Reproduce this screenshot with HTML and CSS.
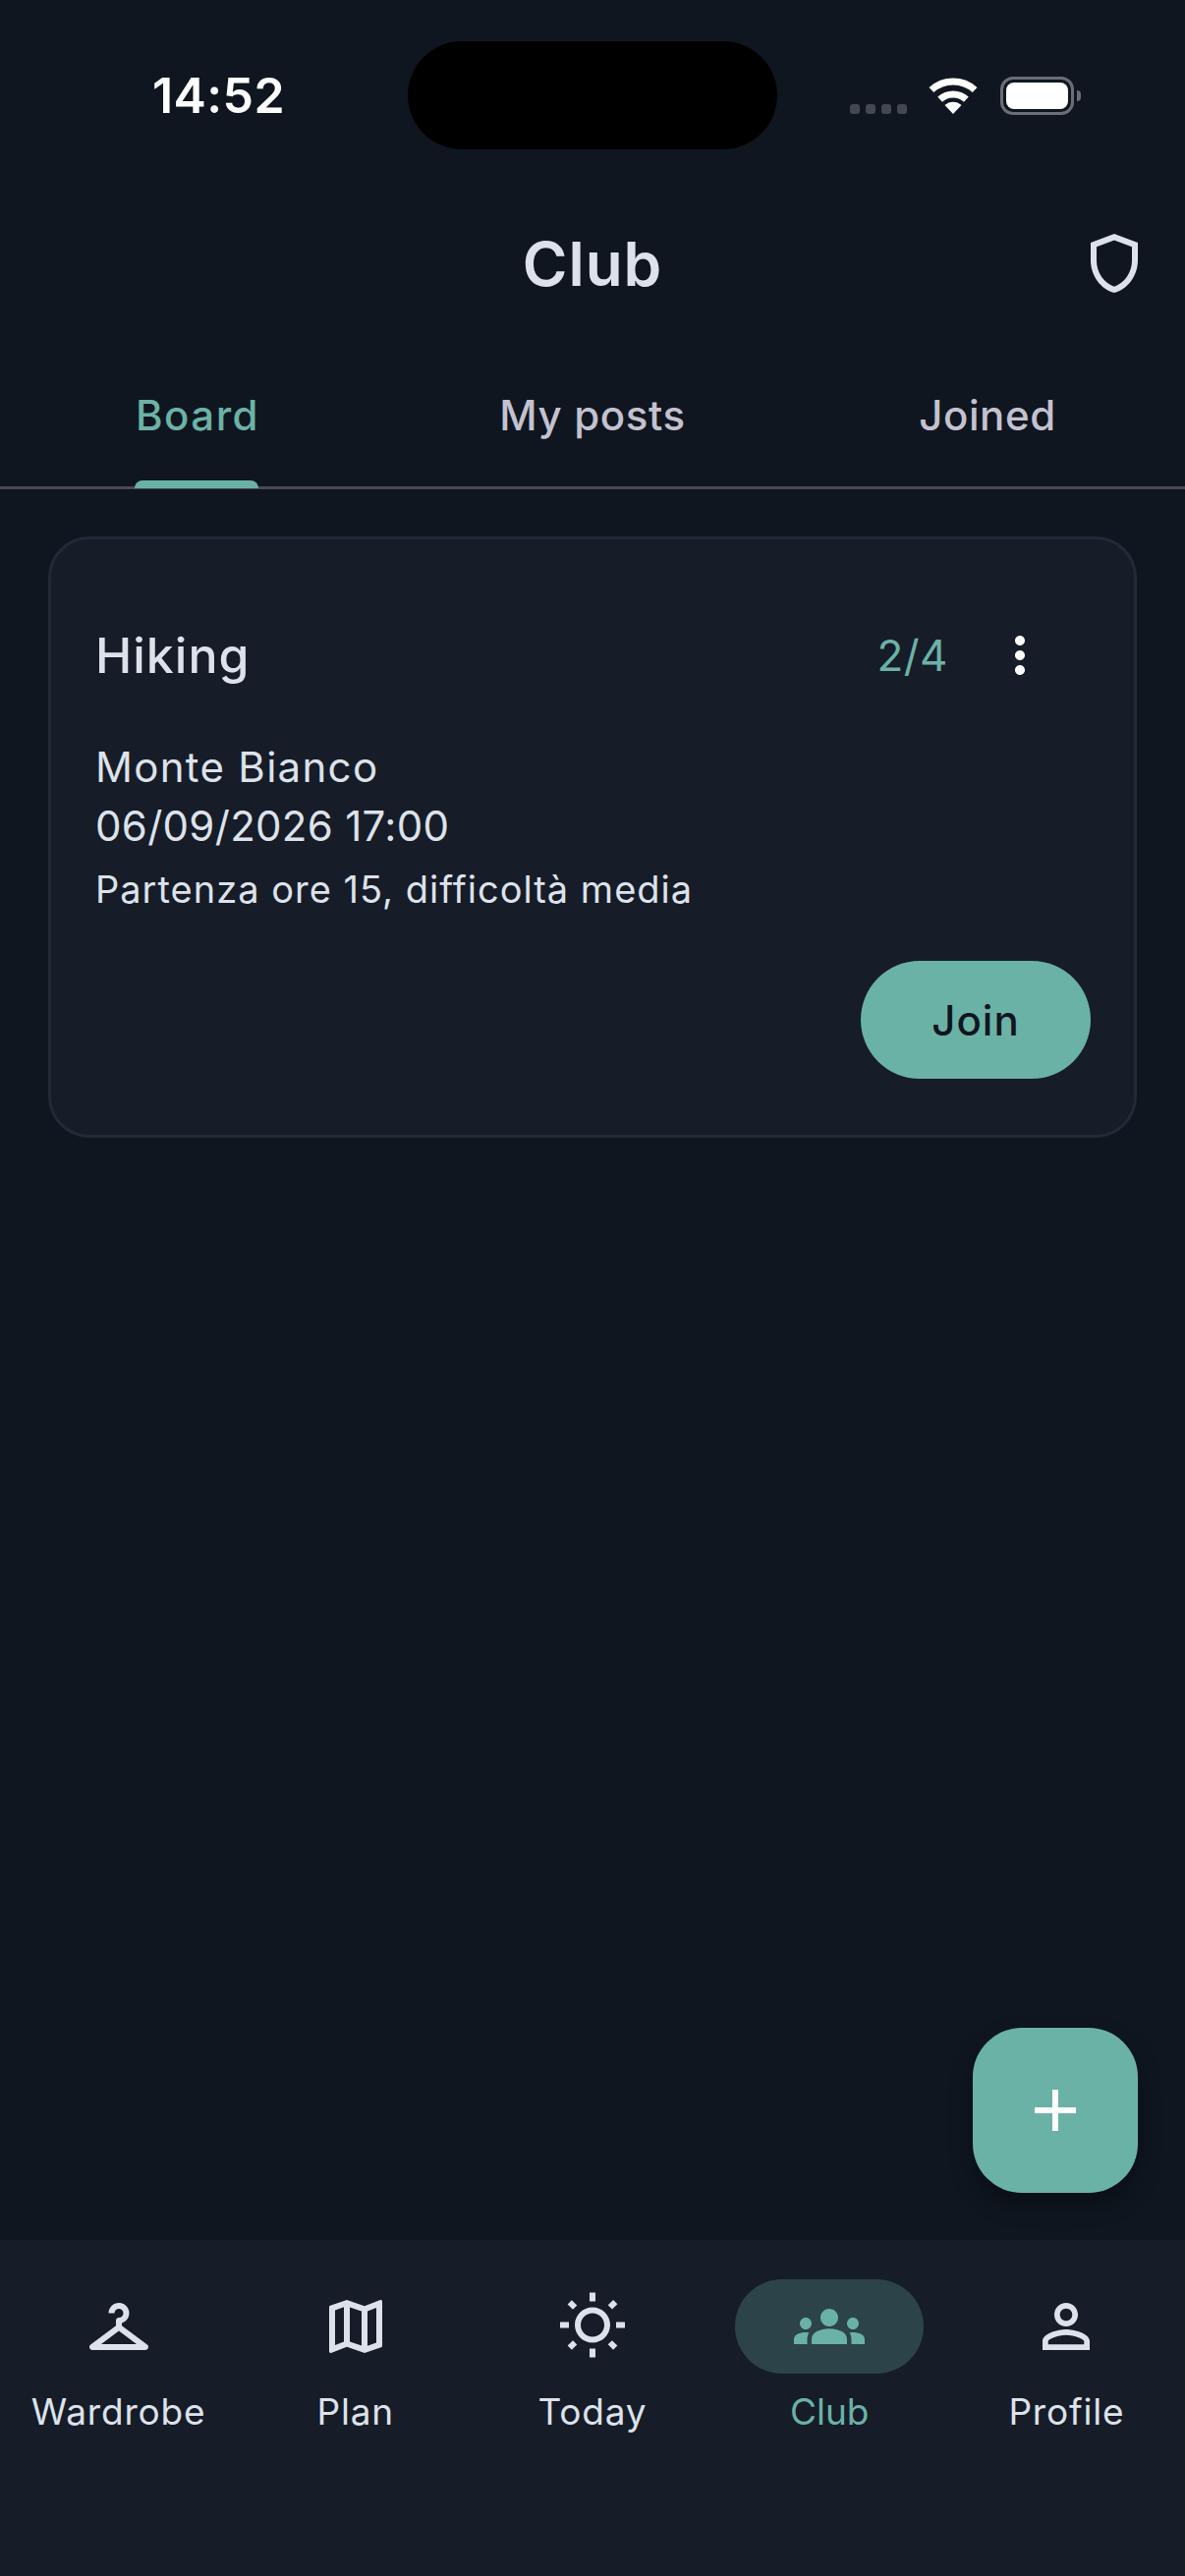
FILE: index.html
```html
<!DOCTYPE html>
<html lang="en">
<head>
    <meta charset="UTF-8">
    <meta name="viewport" content="width=device-width, initial-scale=1.0">
    <title>Club</title>
    <link rel="stylesheet" href="styles.css">
</head>
<body>
    <div class="app">
        <div class="status-bar">
            <div class="time">14:52</div>
            <div class="island"></div>
            <div class="status-icons">
                <div class="signal"><span></span><span></span><span></span><span></span></div>
                <svg class="wifi" viewBox="0 0 50 37" width="50" height="37">
                    <path d="M2.9 12.5A33 33 0 0 1 47.1 12.5" fill="none" stroke="#fff" stroke-width="7"/>
                    <path d="M11.6 22.1A20 20 0 0 1 38.4 22.1" fill="none" stroke="#fff" stroke-width="7"/>
                    <path d="M25 37L16.5 28A12.5 12.5 0 0 1 33.5 28Z" fill="#fff"/>
                </svg>
                <div class="battery"><div class="battery-fill"></div></div>
                <div class="battery-cap"></div>
            </div>
        </div>

        <header class="header">
            <div></div>
            <h1>Club</h1>
            <svg class="shield" viewBox="0 0 24 24" width="72" height="72">
                <path fill="#dde2ea" d="M12 2 4 5v6.09c0 5.05 3.41 9.76 8 10.91 4.59-1.15 8-5.86 8-10.91V5l-8-3zm6 9.09c0 4-2.55 7.7-6 8.83-3.45-1.13-6-4.82-6-8.83v-4.7l6-2.25 6 2.25v4.7z"/>
            </svg>
        </header>

        <div class="tabs">
            <div class="tab active"><span class="tab-label">Board<i class="tab-indicator"></i></span></div>
            <div class="tab"><span class="tab-label">My posts</span></div>
            <div class="tab"><span class="tab-label">Joined</span></div>
        </div>

        <main class="board">
            <div class="card">
                <div class="card-top">
                    <div class="card-title">Hiking</div>
                    <div class="card-count">2/4</div>
                    <svg class="more" viewBox="0 0 24 24" width="60" height="60">
                        <path fill="#fff" d="M12 8c1.1 0 2-.9 2-2s-.9-2-2-2-2 .9-2 2 .9 2 2 2zm0 2c-1.1 0-2 .9-2 2s.9 2 2 2 2-.9 2-2-.9-2-2-2zm0 6c-1.1 0-2 .9-2 2s.9 2 2 2 2-.9 2-2-.9-2-2-2z"/>
                    </svg>
                </div>
                <div class="card-line place">Monte Bianco</div>
                <div class="card-line">06/09/2026 17:00</div>
                <div class="card-note">Partenza ore 15, difficoltà media</div>
                <div class="card-actions">
                    <button class="join-btn">Join</button>
                </div>
            </div>
            <button class="fab">
                <svg viewBox="0 0 42 42" width="42" height="42">
                    <path fill="#fff" d="M18 0h6v18h18v6H24v18h-6V24H0v-6h18z"/>
                </svg>
            </button>
        </main>

        <nav class="nav">
            <div class="nav-item">
                <div class="nav-icon">
                    <svg viewBox="0 0 24 24" width="72" height="72"><path d="M21.6 18.2 13 11.75v-.91c1.65-.49 2.8-2.17 2.43-4.05-.26-1.31-1.3-2.4-2.61-2.7C10.54 3.57 8.5 5.3 8.5 7.5h2c0-.83.67-1.5 1.5-1.5s1.5.67 1.5 1.5c0 .84-.69 1.52-1.53 1.5-.54-.01-.97.45-.97.99v1.76L2.4 18.2c-.77.58-.36 1.8.6 1.8h18c.96 0 1.37-1.22.6-1.8zM6 18l6-4.5 6 4.5H6z"/></svg>
                </div>
                <div class="nav-label">Wardrobe</div>
            </div>
            <div class="nav-item">
                <div class="nav-icon">
                    <svg viewBox="0 0 24 24" width="72" height="72"><path d="M20.5 3l-.16.03L15 5.1 9 3 3.36 4.9c-.21.07-.36.25-.36.48V20.5c0 .28.22.5.5.5l.16-.03L9 18.9l6 2.1 5.64-1.9c.21-.07.36-.25.36-.48V3.5c0-.28-.22-.5-.5-.5zM10 5.47l4 1.4v11.66l-4-1.4V5.47zm-5 .99l3-1.01v11.7l-3 1.16V6.46zm14 11.08l-3 1.01V6.86l3-1.16v11.84z"/></svg>
                </div>
                <div class="nav-label">Plan</div>
            </div>
            <div class="nav-item">
                <div class="nav-icon">
                    <svg viewBox="0 0 24 24" width="72" height="72"><path d="M6.76 4.84l-1.8-1.79-1.41 1.41 1.79 1.79zM1 10.5h3v2H1zM11 .5h2v3h-2zm8.04 2.495l1.408 1.407-1.79 1.79-1.407-1.408zm-1.8 15.115l1.79 1.8 1.41-1.41-1.8-1.79zM20 10.5h3v2h-3zm-8-5c-3.31 0-6 2.69-6 6s2.69 6 6 6 6-2.69 6-6-2.69-6-6-6zm0 10c-2.21 0-4-1.79-4-4s1.79-4 4-4 4 1.79 4 4-1.79 4-4 4zm-1 4h2v3h-2zm-7.45-.96l1.41 1.41 1.79-1.8-1.41-1.41z"/></svg>
                </div>
                <div class="nav-label">Today</div>
            </div>
            <div class="nav-item active">
                <div class="nav-icon">
                    <svg viewBox="0 0 24 24" width="72" height="72"><path d="M12 12.75c1.63 0 3.07.39 4.24.9 1.08.48 1.76 1.56 1.76 2.73V18H6v-1.61c0-1.18.68-2.26 1.76-2.73 1.17-.52 2.61-.91 4.24-.91zM4 13c1.1 0 2-.9 2-2s-.9-2-2-2-2 .9-2 2 .9 2 2 2zm1.13 1.1c-.37-.06-.74-.1-1.13-.1-.99 0-1.93.21-2.78.58C.48 14.9 0 15.62 0 16.43V18h4.5v-1.61c0-.83.23-1.61.63-2.29zM20 13c1.1 0 2-.9 2-2s-.9-2-2-2-2 .9-2 2 .9 2 2 2zm4 3.43c0-.81-.48-1.53-1.22-1.85-.85-.37-1.79-.58-2.78-.58-.39 0-.76.04-1.13.1.4.68.63 1.46.63 2.29V18H24v-1.57zM12 6c1.66 0 3 1.34 3 3s-1.34 3-3 3-3-1.34-3-3 1.34-3 3-3z"/></svg>
                </div>
                <div class="nav-label">Club</div>
            </div>
            <div class="nav-item">
                <div class="nav-icon">
                    <svg viewBox="0 0 24 24" width="72" height="72"><path d="M12 5.9c1.16 0 2.1.94 2.1 2.1s-.94 2.1-2.1 2.1S9.9 9.16 9.9 8s.94-2.1 2.1-2.1m0 9c2.97 0 6.1 1.46 6.1 2.1v1.1H5.9V17c0-.64 3.13-2.1 6.1-2.1M12 4C9.79 4 8 5.79 8 8s1.79 4 4 4 4-1.79 4-4-1.79-4-4-4zm0 9c-2.67 0-8 1.34-8 4v3h16v-3c0-2.66-5.33-4-8-4z"/></svg>
                </div>
                <div class="nav-label">Profile</div>
            </div>
        </nav>
    </div>
</body>
</html>
```

FILE: styles.css
```css
body {
    margin: 0;
    background-color: #0f161f;
    font-family: Inter, "Noto Sans", sans-serif;
    color: #dde2ea;
}
.app {
    width: 1206px;
    height: 2622px;
    display: flex;
    flex-direction: column;
    overflow: hidden;
}

/* status bar */
.status-bar {
    display: grid;
    grid-template-columns: 415px 376px 1fr;
    align-items: center;
    padding-top: 42px;
}
.time {
    padding-left: 155px;
    font-size: 50px;
    font-weight: 600;
    letter-spacing: 0.4px;
    color: #fff;
}
.island {
    height: 110px;
    background-color: #000;
    border-radius: 55px;
}
.status-icons {
    display: flex;
    align-items: flex-end;
    padding-left: 74px;
    height: 39px;
}
.signal {
    display: flex;
    gap: 6px;
    margin-bottom: 1px;
}
.signal span {
    width: 10px;
    height: 10px;
    background-color: #434850;
    border-radius: 3px;
}
.wifi {
    margin-left: 22px;
    margin-bottom: 1px;
}
.battery {
    width: 75px;
    height: 39px;
    margin-left: 23px;
    padding: 3px;
    box-sizing: border-box;
    border: 3px solid #6b6e75;
    border-radius: 13px;
}
.battery-fill {
    height: 100%;
    background-color: #fff;
    border-radius: 8px;
}
.battery-cap {
    width: 4px;
    height: 11px;
    margin: 0 0 14px 3px;
    background-color: #6b6e75;
    border-radius: 0 5px 5px 0;
}

/* header */
.header {
    height: 232px;
    display: grid;
    grid-template-columns: 1fr auto 1fr;
    align-items: center;
    padding-right: 36px;
}
.header h1 {
    margin: 0;
    padding-left: 36px;
    font-size: 62px;
    font-weight: 600;
    letter-spacing: 1px;
}
.shield {
    justify-self: end;
}

/* tabs */
.tabs {
    display: grid;
    grid-template-columns: repeat(3, 1fr);
    height: 111px;
    border-bottom: 3px solid #4a4852;
}
.tab {
    display: flex;
    justify-content: center;
    color: #c4c1cf;
    font-size: 42px;
    font-weight: 500;
    letter-spacing: 0.6px;
    line-height: 78px;
}
.tab.active {
    color: #6bb2a6;
    letter-spacing: 1.5px;
}
.tab-label {
    position: relative;
    height: 111px;
}
.tab-indicator {
    position: absolute;
    left: -1px;
    right: 1px;
    bottom: -2px;
    height: 8px;
    background-color: #6bb2a6;
    border-radius: 9px 9px 0 0;
}

/* board */
.board {
    flex: 1;
    position: relative;
    padding: 48px 49px 0;
}
.card {
    height: 612px;
    box-sizing: border-box;
    padding: 88px 44px 0 45px;
    background-color: #161c28;
    border: 3px solid #232937;
    border-radius: 42px;
}
.card-top {
    display: flex;
    align-items: center;
    height: 60px;
    margin-bottom: 54px;
}
.card-title {
    flex: 1;
    font-size: 50px;
    font-weight: 500;
    letter-spacing: 1px;
}
.card-count {
    margin-right: 43px;
    color: #6bb2a6;
    font-size: 44px;
    letter-spacing: 0.5px;
}
.more {
    margin-right: 42px;
}
.card-line {
    font-size: 42px;
    line-height: 60px;
    letter-spacing: 0.3px;
}
.card-line.place {
    letter-spacing: 1.3px;
}
.card-note {
    margin-top: 1px;
    font-size: 38px;
    line-height: 66px;
    letter-spacing: 1px;
}
.card-actions {
    display: flex;
    justify-content: flex-end;
    margin-top: 40px;
}
.join-btn {
    width: 234px;
    height: 120px;
    background-color: #6bb2a6;
    color: #10161f;
    font-family: inherit;
    font-size: 42px;
    font-weight: 500;
    letter-spacing: 1px;
    border: none;
    border-radius: 60px;
}
.fab {
    position: absolute;
    right: 48px;
    bottom: 48px;
    width: 168px;
    height: 168px;
    padding: 0;
    display: flex;
    align-items: center;
    justify-content: center;
    background-color: #6bb2a6;
    border: none;
    border-radius: 50px;
    box-shadow: 0 12px 24px rgba(0, 0, 0, 0.3);
}

/* bottom nav */
.nav {
    height: 342px;
    box-sizing: border-box;
    display: grid;
    grid-template-columns: repeat(5, 1fr);
    padding-top: 40px;
    background-color: #161c28;
}
.nav-item {
    display: flex;
    flex-direction: column;
    align-items: center;
}
.nav-icon {
    width: 192px;
    height: 96px;
    display: flex;
    align-items: center;
    justify-content: center;
    border-radius: 48px;
    fill: #dde2ea;
}
.nav-label {
    margin-top: 14px;
    font-size: 37px;
    line-height: 50px;
    letter-spacing: 0.8px;
}
.nav-item.active .nav-icon {
    background-color: #2c4449;
    fill: #6bb2a6;
}
.nav-item.active .nav-label {
    color: #6bb2a6;
    letter-spacing: 0;
}
```
